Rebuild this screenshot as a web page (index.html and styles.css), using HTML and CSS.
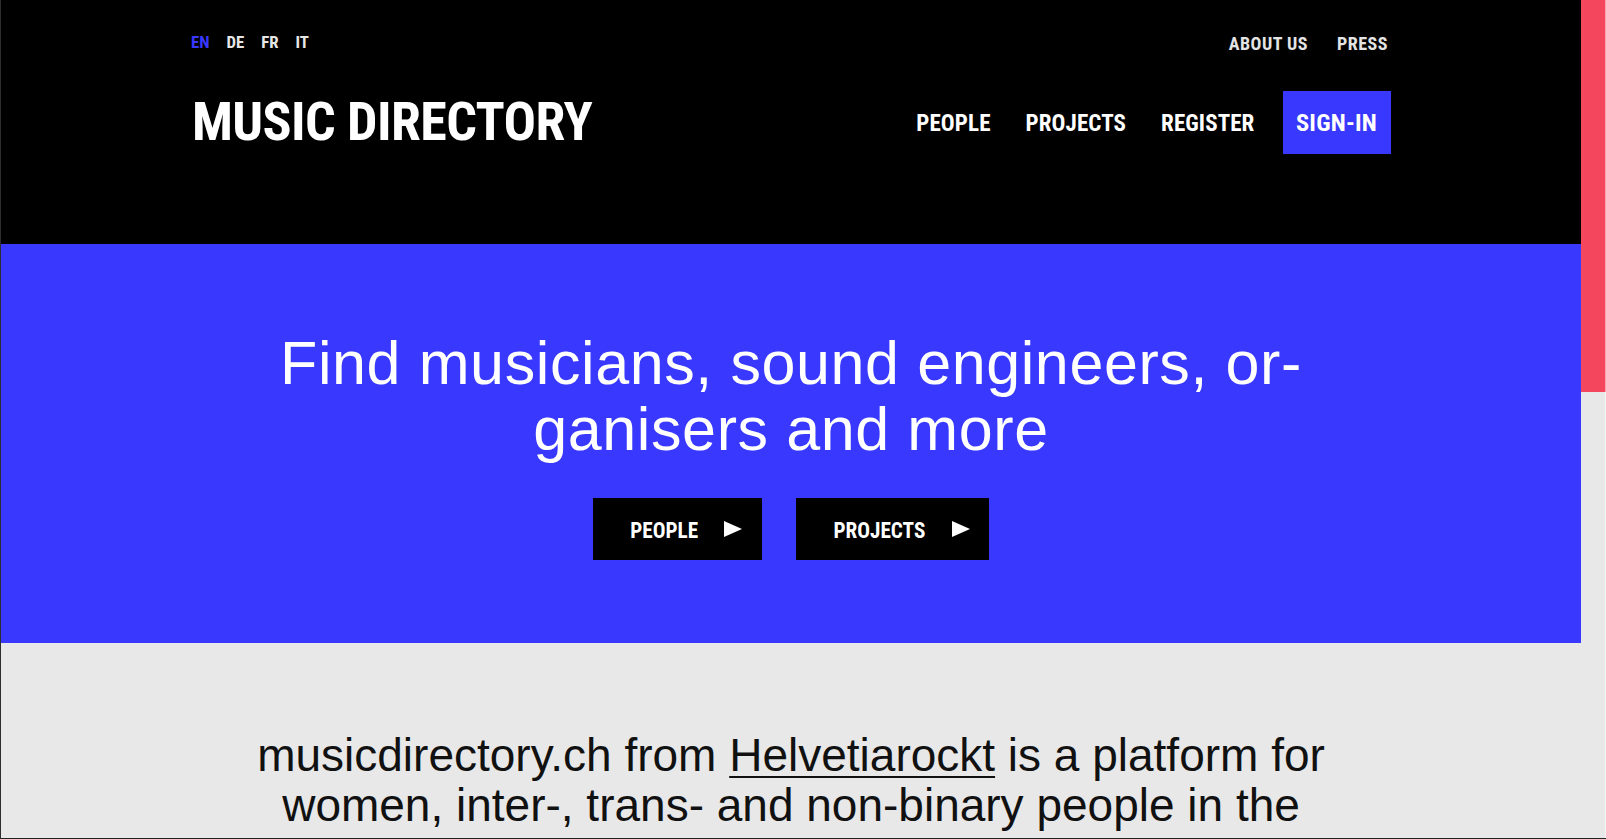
FILE: index.html
```html
<!DOCTYPE html>
<html lang="en">
<head>
<meta charset="utf-8">
<title>Music Directory</title>
<link rel="stylesheet" href="styles.css">
</head>
<body>
<div class="frame">
  <div class="page">
    <header class="site-header">
      <div class="container">
        <div class="topbar">
          <nav class="langs">
            <a class="lang active" href="#">EN</a>
            <a class="lang" href="#">DE</a>
            <a class="lang" href="#">FR</a>
            <a class="lang" href="#">IT</a>
          </nav>
          <nav class="meta">
            <a href="#">ABOUT US</a>
            <a href="#">PRESS</a>
          </nav>
        </div>
        <div class="mainbar">
          <a class="logo" href="#">MUSIC DIRECTORY</a>
          <nav class="mainnav">
            <a href="#">PEOPLE</a>
            <a href="#">PROJECTS</a>
            <a href="#">REGISTER</a>
            <a class="signin" href="#">SIGN-IN</a>
          </nav>
        </div>
      </div>
    </header>
    <section class="hero">
      <h1>Find musicians, sound engineers, or-<br>ganisers and more</h1>
      <div class="ctas">
        <a class="cta" href="#"><span>PEOPLE</span><svg class="tri" width="18" height="16" viewBox="0 0 18 16"><polygon points="0,0 18,8 0,16" fill="#fff"/></svg></a>
        <a class="cta" href="#"><span>PROJECTS</span><svg class="tri" width="18" height="16" viewBox="0 0 18 16"><polygon points="0,0 18,8 0,16" fill="#fff"/></svg></a>
      </div>
    </section>
    <section class="about">
      <p>musicdirectory.ch from <a href="#">Helvetiarockt</a> is a platform for women, inter-, trans- and non-binary people in the</p>
    </section>
  </div>
  <div class="scrollbar"><div class="thumb"></div></div>
</div>
</body>
</html>
```
FILE: styles.css
```css
* { box-sizing: border-box; }
html, body { margin: 0; padding: 0; overflow: hidden; background: #e8e8e8; }
a { color: inherit; text-decoration: none; }

.frame {
  display: flex;
  width: 1606px;
  height: 839px;
  border-left: 1px solid #2e2e2e;
  border-bottom: 1px solid #222;
  overflow: hidden;
}
.page {
  width: 1580px;
  flex: none;
  overflow: hidden;
}
.scrollbar {
  width: 25px;
  flex: none;
  background: #e8e8e8;
  box-shadow: inset -1px 0 0 #f4f4f4;
}
.thumb {
  height: 392px;
  background: #f4475e;
  box-shadow: inset -1px 0 0 #f9a3ae;
}

.site-header {
  background: #000;
  color: #fff;
  height: 244px;
  padding-top: 32px;
}
.container {
  width: 1200px;
  margin: 0 auto;
}
.topbar, .mainbar, .cta {
  font-family: "Roboto Condensed", "Roboto", sans-serif;
  font-stretch: 75%;
  font-weight: 700;
}
.topbar {
  display: flex;
  justify-content: space-between;
  align-items: flex-start;
  height: 20px;
  line-height: 20px;
}
.mainbar {
  display: flex;
  justify-content: space-between;
  align-items: flex-start;
  margin-top: 39px;
}
.langs {
  display: flex;
  gap: 17px;
  font-size: 16.8px;
  letter-spacing: 0;
  color: #e6e6e6;
}
.lang.active { color: #3838ff; }
.meta {
  display: flex;
  gap: 29px;
  padding-top: 2px;
  margin-right: 3px;
  font-size: 18px;
  letter-spacing: 0.5px;
  color: #e4e4e4;
}
.logo {
  font-size: 54px;
  line-height: 61px;
  letter-spacing: -0.6px;
  margin-left: 1px;
}
.mainnav {
  display: flex;
  align-items: baseline;
  gap: 35px;
  font-size: 23px;
  letter-spacing: 0.1px;
}
.mainnav .signin {
  display: block;
  margin-left: -6px;
  background: #3838ff;
  font-size: 24.5px;
  line-height: 63px;
  letter-spacing: 0.2px;
  padding: 0 14px 0 12.5px;
}

.hero {
  background: #3838ff;
  color: #fff;
  height: 399px;
  padding-top: 86px;
  text-align: center;
}
.hero h1 {
  margin: 0;
  font-family: "Liberation Sans", Arial, sans-serif;
  font-weight: 400;
  font-size: 61px;
  line-height: 66px;
  letter-spacing: 0.6px;
}
.ctas {
  display: flex;
  justify-content: center;
  gap: 34px;
  margin-top: 36px;
}
.cta {
  display: flex;
  align-items: center;
  height: 62px;
  background: #000;
  color: #fff;
  padding: 0 19.6px 0 37.5px;
  font-size: 21.2px;
  letter-spacing: 0;
  gap: 26.3px;
}
.cta span { padding-top: 2px; }
.tri { display: block; }

.about {
  background: #e8e8e8;
  padding-top: 87px;
}
.about p {
  margin: 0 auto;
  max-width: 1100px;
  text-align: center;
  font-family: "Liberation Sans", Arial, sans-serif;
  font-size: 46px;
  line-height: 50px;
  color: #111;
}
.about p a {
  text-decoration: underline;
  text-decoration-thickness: 2px;
  text-underline-offset: 5px;
}
```
